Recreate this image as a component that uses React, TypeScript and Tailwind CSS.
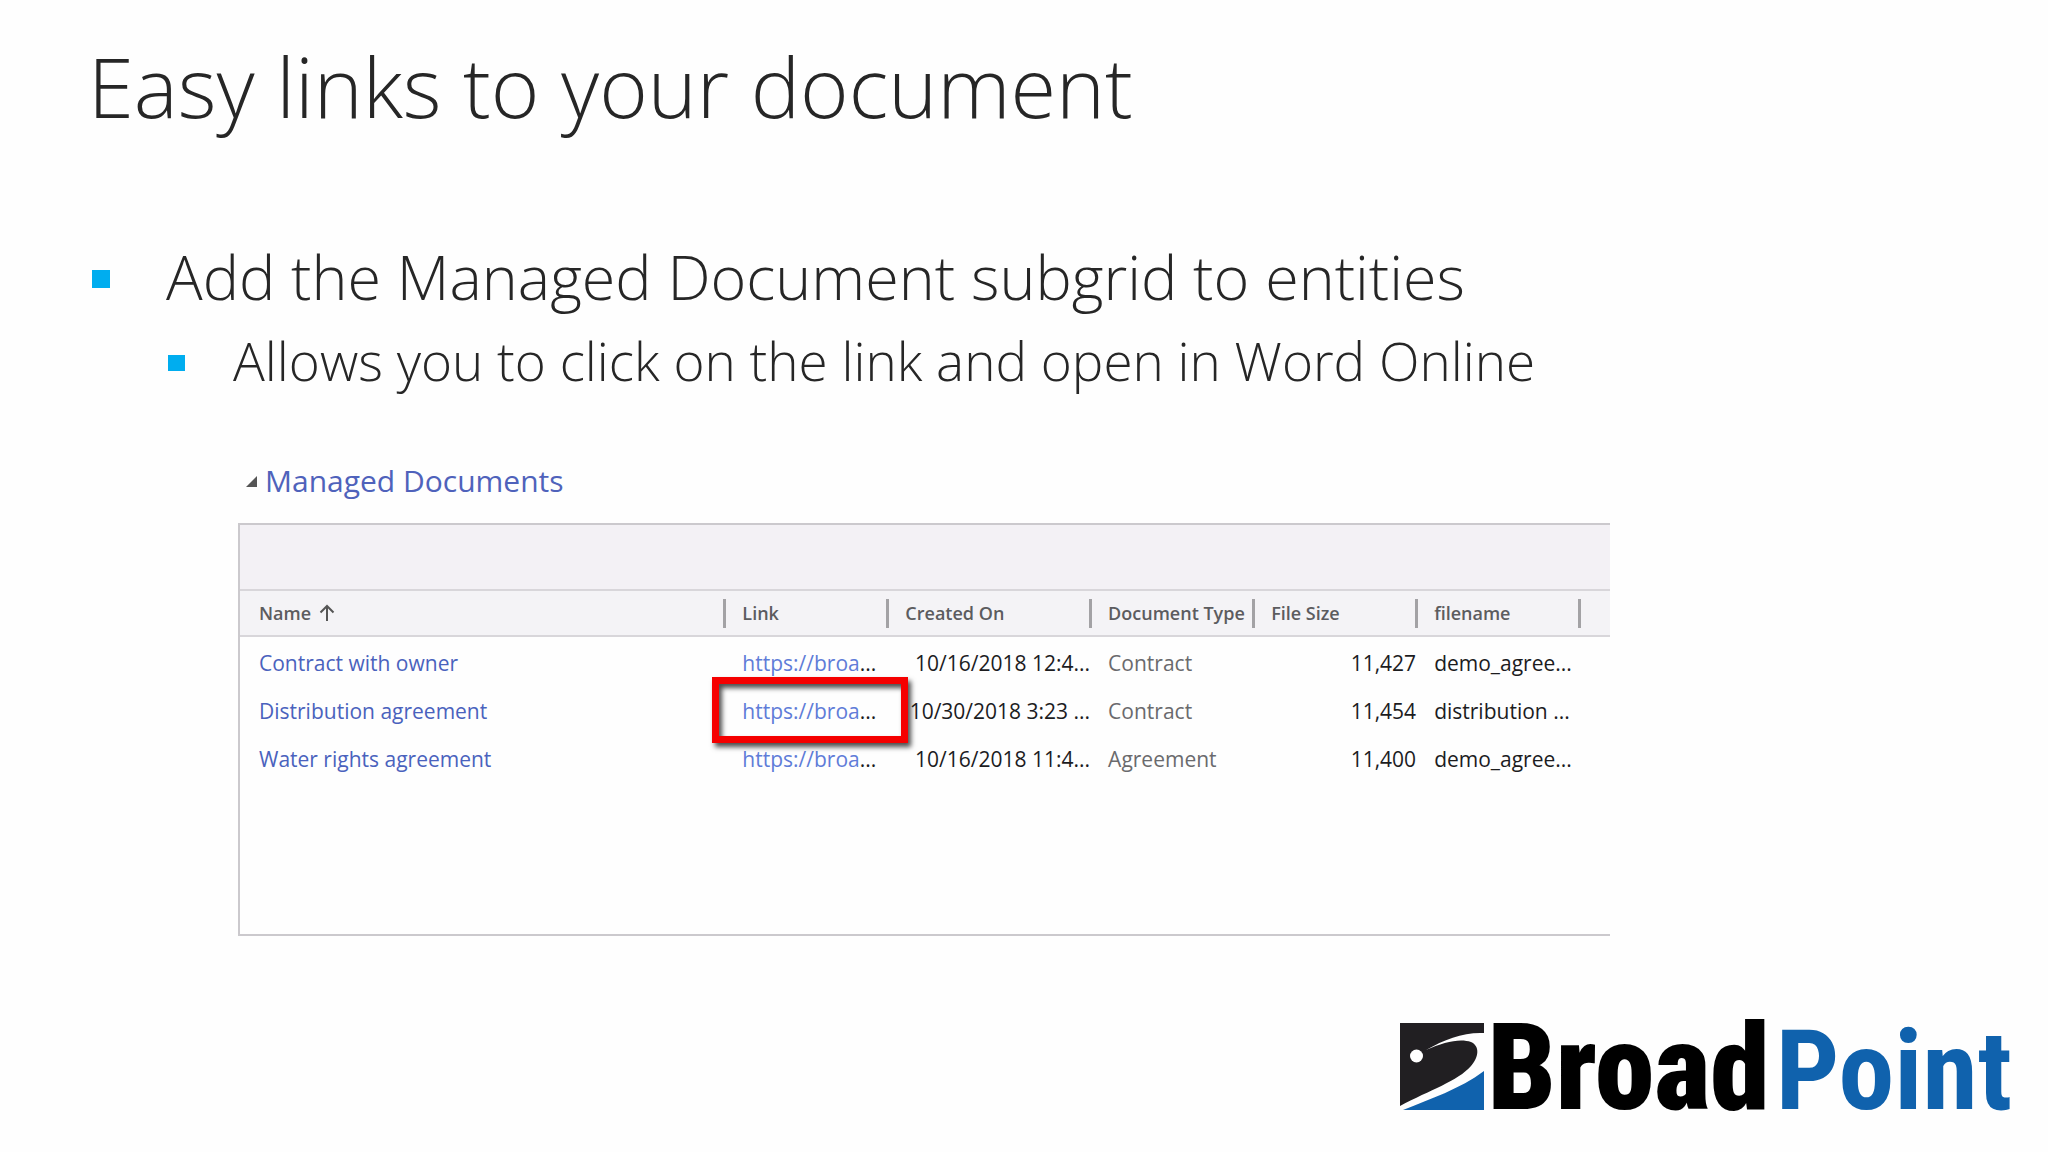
const columns = [
  { label: 'Name', width: 'w-[35.5%]', sorted: true },
  { label: 'Link', width: 'w-[11.9%]' },
  { label: 'Created On', width: 'w-[14.8%]' },
  { label: 'Document Type', width: 'w-[11.9%]' },
  { label: 'File Size', width: 'w-[11.9%]' },
  { label: 'filename', width: 'w-[11.9%]' },
]

const documents = [
  { name: 'Contract with owner', created: '10/16/2018 12:4...', type: 'Contract', size: '11,427', file: 'demo_agree...' },
  { name: 'Distribution agreement', created: '10/30/2018 3:23 ...', type: 'Contract', size: '11,454', file: 'distribution ...', highlighted: true },
  { name: 'Water rights agreement', created: '10/16/2018 11:4...', type: 'Agreement', size: '11,400', file: 'demo_agree...' },
]

function SortArrow() {
  return (
    <svg viewBox="0 0 16 18" className="h-[18px] w-4" fill="none" stroke="#555" strokeWidth="2">
      <path d="M8 17V2M1.500 8.500 8 2l6.500 6.500" />
    </svg>
  )
}

function DocumentGrid() {
  return (
    <div className="min-h-[413px] border-2 border-r-0 border-[#cbc9cd]">
      <div className="h-[66px] border-b-2 border-[#d8d6da] bg-[#f3f1f5]" />
      <table className="w-full table-fixed border-separate border-spacing-0 whitespace-nowrap text-left">
        <thead>
          <tr className="h-[46px] bg-[#f4f3f6] text-[18px] text-[#5c5c5f]">
            {columns.map(({ label, width, sorted }) => (
              <th key={label} className={`${width} border-b-2 border-[#d8d6da] p-0 font-semibold`}>
                <div className={`flex h-[29px] items-center gap-2 border-r-3 border-[#a3a2a5] ${sorted ? 'pl-[19px]' : 'pl-4'}`}>
                  {label}
                  {sorted && <SortArrow />}
                </div>
              </th>
            ))}
            <th className="border-b-2 border-[#d8d6da] p-0" aria-label="More" />
          </tr>
        </thead>
        <tbody className="text-[21px] leading-8 text-[#1c1c1e]">
          {documents.map((doc) => (
            <tr key={doc.name} className="h-12">
              <td className="p-0 pt-1 pl-[19px]">
                <a href="#" className="text-[#4a62bd]">{doc.name}</a>
              </td>
              <td className="relative p-0 pt-1 pl-4">
                <a href="#" className="text-[#5f7cd8]">https://broa</a>...
                {doc.highlighted && (
                  <span className="pointer-events-none absolute -top-2 -left-3.5 z-10 h-[66px] w-[196px] border-7 border-[#f50000] shadow-[3px_4px_5px_rgba(0,0,0,0.7),inset_3px_4px_5px_rgba(0,0,0,0.7)]" />
                )}
              </td>
              <td className="p-0 pt-1 pr-0.5 text-right">{doc.created}</td>
              <td className="p-0 pt-1 pl-4 text-[#6a6a6d]">{doc.type}</td>
              <td className="p-0 pt-1 pr-0.5 text-right">{doc.size}</td>
              <td className="p-0 pt-1 pl-4">{doc.file}</td>
              <td className="p-0" />
            </tr>
          ))}
        </tbody>
      </table>
    </div>
  )
}

function Logo() {
  return (
    <div className="flex items-end gap-1">
      <svg viewBox="0 0 84 87" className="h-[87px] w-[84px]">
        <path d="M0 0H84V10C64 9 45 16 26 27C44 19 60 15 71 19C80 23 79 34 71 43C58 58 30 67 0 83Z" fill="#211f22" />
        <circle cx="16.500" cy="33" r="6.500" fill="#fff" />
        <path d="M3 87C30 76 60 66 84 48V87Z" fill="#1062ad" />
      </svg>
      <div className="flex items-baseline gap-1.5 font-['Roboto_Condensed','Liberation_Sans',sans-serif] leading-[79px]">
        <span className="text-[120px] font-black text-black">Broad</span>
        <span className="text-[112px] font-bold text-[#1062ad]">Point</span>
      </div>
    </div>
  )
}

export default function App() {
  return (
    <div className="flex min-h-screen flex-col bg-[#fefefe] font-['Open_Sans','Noto_Sans',sans-serif] text-[#262626]">
      <main className="pt-9 pl-[88px]">
        <h1 className="text-[83px] leading-[100px] font-light">Easy links to your document</h1>
        <ul className="mt-[101px] font-light">
          <li>
            <div className="flex items-center gap-14 pl-1 text-[61px] leading-20">
              <span className="mt-1 h-[18px] w-[18px] bg-[#00adef]" />
              Add the Managed Document subgrid to entities
            </div>
            <ul className="mt-2 pl-20">
              <li className="flex items-center gap-12 text-[53px] leading-[72px]">
                <span className="mt-1 h-4 w-[17px] bg-[#00adef]" />
                Allows you to click on the link and open in Word Online
              </li>
            </ul>
          </li>
        </ul>
        <section className="mt-[62px] ml-[150px] w-[70%]">
          <h2 className="flex items-center gap-2 pl-2 text-[30px] leading-11 text-[#4f62bb]">
            <svg viewBox="0 0 11 11" className="h-[11px] w-[11px]">
              <path d="M11 0V11H0Z" fill="#555" />
            </svg>
            Managed Documents
          </h2>
          <div className="mt-5">
            <DocumentGrid />
          </div>
        </section>
      </main>
      <footer className="mt-auto flex justify-end pr-9 pb-[42px]">
        <Logo />
      </footer>
    </div>
  )
}
